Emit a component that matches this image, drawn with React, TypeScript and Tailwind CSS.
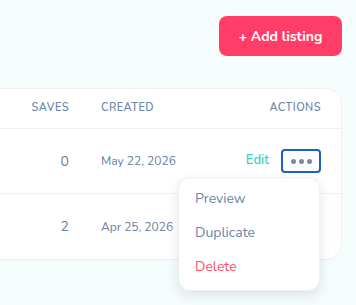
import React from 'react';

const rows = [
  { saves: 0, created: 'May 22, 2026', open: true },
  { saves: 2, created: 'Apr 25, 2026', open: false },
];

const App: React.FC = () => {
  return (
    <div className="h-[305px] w-[356px] overflow-hidden bg-[#f4fcfc] font-['Nunito','Lato',sans-serif]">
      <div className="flex justify-end pt-4 pr-[14px]">
        <button className="h-10 w-[123px] rounded-lg bg-[#ff3d68] text-[14px] font-bold text-white">
          + Add listing
        </button>
      </div>

      <div className="mt-8 -ml-10 mr-[14px] rounded-2xl border border-[#eef2f5] bg-white">
        {/* Header */}
        <div className="flex h-10 items-center border-b border-[#eef1f4] pr-5 text-[11px] font-semibold uppercase tracking-[0.04em] text-[#7189a9]">
          <div className="w-[108px] text-right">Saves</div>
          <div className="ml-8 w-[120px]">Created</div>
          <div className="flex-1 text-right">Actions</div>
        </div>

        {rows.map((r, i) => (
          <div
            key={i}
            className={`flex h-[65px] items-center pr-5 ${i === 0 ? 'border-b border-[#eef1f4]' : ''}`}
          >
            <div className="w-[108px] text-right text-[14px] text-[#6a80a0]">{r.saves}</div>
            <div className="ml-8 w-[120px] text-[12px] text-[#6a80a0]">{r.created}</div>
            <div className="flex flex-1 items-center justify-end">
              {r.open && (
                <>
                  <span className="mr-3 text-[13px] font-semibold text-[#3fd0bb]">Edit</span>
                  <div className="relative">
                    <button className="flex h-6 w-10 items-center justify-center gap-[3px] rounded border-2 border-[#1c5fc7] bg-white">
                      <span className="h-[5px] w-[5px] rounded-full bg-[#7a8aa6]" />
                      <span className="h-[5px] w-[5px] rounded-full bg-[#7a8aa6]" />
                      <span className="h-[5px] w-[5px] rounded-full bg-[#7a8aa6]" />
                    </button>
                    <div className="absolute top-full right-[1px] z-10 mt-[4px] w-[142px] rounded-xl border border-[#eef1f4] bg-white pt-[3px] pb-[7px] shadow-[0_4px_12px_rgba(30,50,80,0.12)]">
                      <div className="flex h-[34px] items-center px-4 text-[14px] text-[#6b84a8]">Preview</div>
                      <div className="flex h-[34px] items-center px-4 text-[14px] text-[#6b84a8]">Duplicate</div>
                      <div className="flex h-[34px] items-center px-4 text-[14px] text-[#ff4f5f]">Delete</div>
                    </div>
                  </div>
                </>
              )}
            </div>
          </div>
        ))}
      </div>
    </div>
  );
};

export default App;
